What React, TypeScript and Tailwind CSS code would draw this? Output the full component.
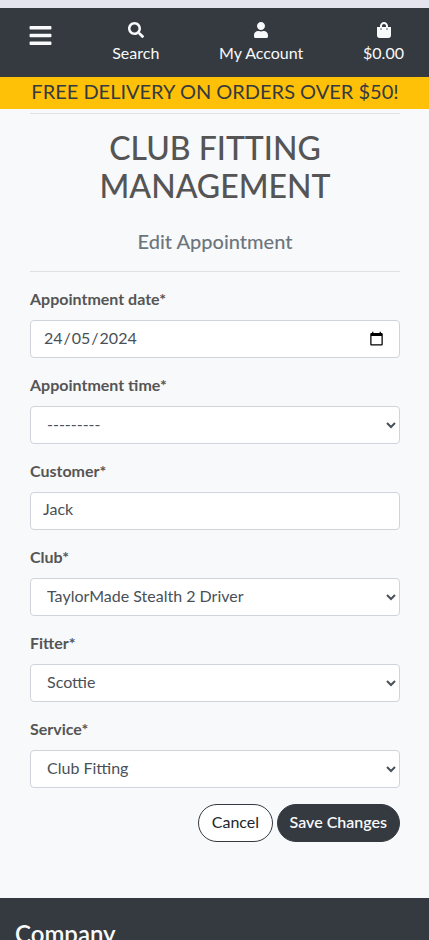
import type { ReactNode } from "react";
import { FaBars, FaSearch, FaShoppingBag, FaUser } from "react-icons/fa";

const control =
  "block h-[38px] w-full rounded-[4px] border border-[#ced4da] bg-white px-3 text-base leading-6 text-[#495057]";

function Field({ label, children }: { label: string; children: ReactNode }) {
  return (
    <div className="mb-[15px]">
      <label className="mb-[9px] block text-base font-bold leading-6">{label}*</label>
      {children}
    </div>
  );
}

function SelectField({ label, value }: { label: string; value: string }) {
  return (
    <Field label={label}>
      <select className={`${control} pb-[7px] pt-[5px]`} defaultValue={value}>
        <option value={value}>{value}</option>
      </select>
    </Field>
  );
}

function NavItem({ icon, text }: { icon: ReactNode; text: string }) {
  return (
    <a className="flex flex-col items-center text-base leading-6 text-[#f8f9fa]">
      <span className="flex h-[23px] items-center pt-px">{icon}</span>
      <span>{text}</span>
    </a>
  );
}

export default function App() {
  return (
    <div className="flex h-[940px] w-full flex-col overflow-hidden bg-[#f8f9fa] font-['Lato',sans-serif] text-[#555]">
      <div className="h-2 shrink-0 bg-[#e4e4ef]" />
      <header className="flex h-[69px] shrink-0 items-start justify-between bg-[#343a40] pl-[27.5px] pr-[25px] pt-[10px] text-[#f8f9fa]">
        <FaBars className="mt-[5px] size-[25px]" />
        <NavItem icon={<FaSearch className="size-4" />} text="Search" />
        <NavItem icon={<FaUser className="size-4" />} text="My Account" />
        <NavItem icon={<FaShoppingBag className="size-4" />} text="$0.00" />
      </header>
      <div className="h-8 shrink-0 bg-[#ffc107] pl-px pt-[2px] text-center text-xl leading-6 text-[#343a40]">
        FREE DELIVERY ON ORDERS OVER $50!
      </div>
      <main className="h-[789px] shrink-0 pl-[30px] pr-[29px] pt-1">
        <hr className="border-[#dfe0e1]" />
        <h2 className="mt-[15px] text-center text-[32px] font-medium leading-[38.4px]">
          CLUB FITTING
          <br />
          MANAGEMENT
        </h2>
        <h5 className="mt-[23px] text-center text-xl font-medium leading-6 text-[#6c757d]">
          Edit Appointment
        </h5>
        <hr className="mb-[15px] mt-[18px] border-[#dfe0e1]" />
        <form>
          <Field label="Appointment date">
            <div className={`${control} flex items-center justify-between pb-[7px] pt-[5px]`}>
              <span className="flex">
                <span className="px-px">24</span>/<span className="px-px">05</span>/
                <span className="px-px">2024</span>
              </span>
              <svg className="mr-[3px] mt-px h-[15px] w-[15px]" viewBox="0 0 24 24" fill="#000">
                <path d="M20 3h-1V1h-2v2H7V1H5v2H4c-1.100 0-2 .9-2 2v16c0 1.100.9 2 2 2h16c1.100 0 2-.9 2-2V5c0-1.100-.9-2-2-2zm0 18H4V8h16v13z" />
              </svg>
            </div>
          </Field>
          <SelectField label="Appointment time" value="---------" />
          <Field label="Customer">
            <input className={`${control} pb-2 pt-1`} type="text" defaultValue="Jack" />
          </Field>
          <SelectField label="Club" value="TaylorMade Stealth 2 Driver" />
          <SelectField label="Fitter" value="Scottie" />
          <SelectField label="Service" value="Club Fitting" />
          <div className="flex justify-end gap-1 pt-px">
            <button
              type="button"
              className="h-[38px] rounded-full border border-[#343a40] bg-white px-[12.5px] pb-0.5 text-base text-[#212529]"
            >
              Cancel
            </button>
            <button
              type="button"
              className="h-[38px] rounded-full border border-[#343a40] bg-[#343a40] px-3 pb-0.5 text-base font-semibold text-[#f8f9fa]"
            >
              Save Changes
            </button>
          </div>
        </form>
      </main>
      <footer className="grow bg-[#343a40] px-[15px] pt-[22px] text-[#f8f9fa]">
        <h4 className="text-2xl font-semibold leading-[28.8px]">Company</h4>
      </footer>
    </div>
  );
}
